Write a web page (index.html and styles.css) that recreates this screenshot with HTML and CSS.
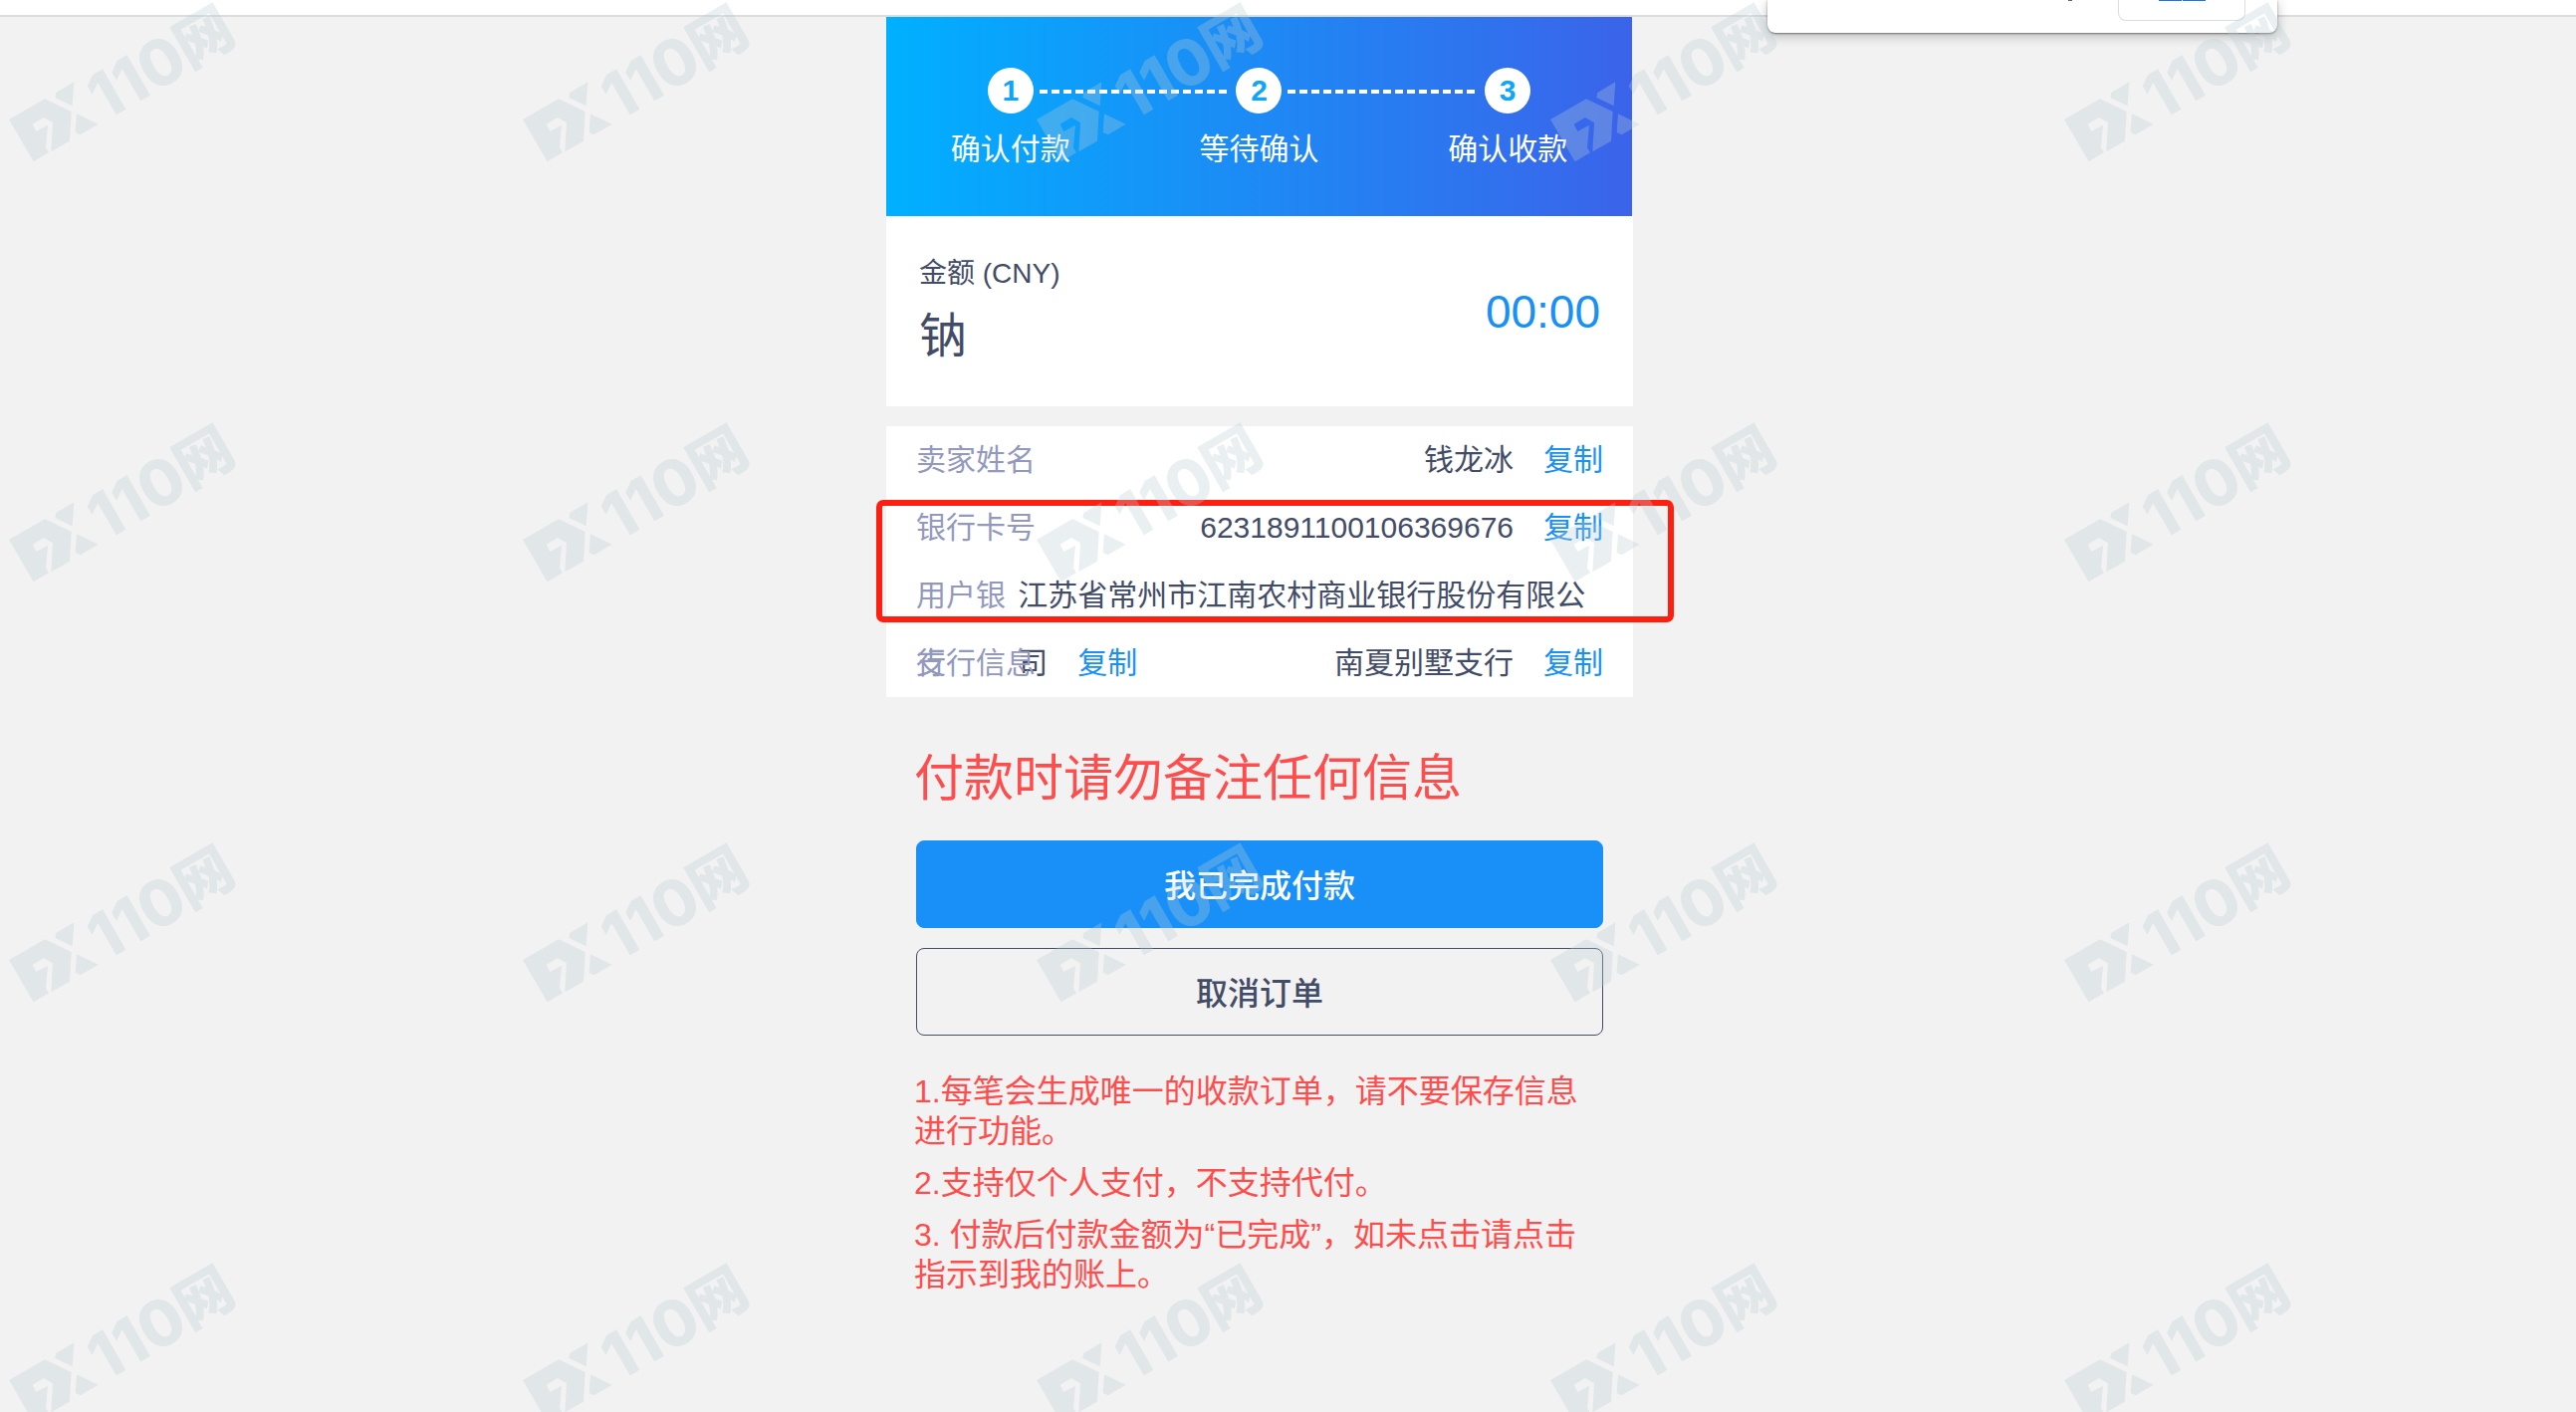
FILE: index.html
```html
<!DOCTYPE html>
<html lang="zh-CN">
<head>
<meta charset="utf-8">
<meta name="viewport" content="width=device-width, initial-scale=1">
<title>确认付款</title>
<link rel="stylesheet" href="styles.css">
</head>
<body>
<div class="toolbar"></div>

<main class="page">
  <div class="column">
    <ol class="steps">
      <li class="step"><span class="step-number">1</span><span class="step-label">确认付款</span></li>
      <li class="step"><span class="step-number">2</span><span class="step-label">等待确认</span></li>
      <li class="step"><span class="step-number">3</span><span class="step-label">确认收款</span></li>
    </ol>

    <section class="amount">
      <div>
        <div class="amount-label">金额 (CNY)</div>
        <div class="amount-value">钠</div>
      </div>
      <time class="countdown">00:00</time>
    </section>

    <section class="details">
      <div class="row"><span>卖家姓名</span><span class="value">钱龙冰<button class="copy" type="button">复制</button></span></div>
      <div class="row"><span>银行卡号</span><span class="value">6231891100106369676<button class="copy" type="button">复制</button></span></div>
      <div class="row"><span>用户银行</span><span class="value">江苏省常州市江南农村商业银行股份有限公司<button class="copy" type="button">复制</button></span></div>
      <div class="row"><span>支行信息</span><span class="value">南夏别墅支行<button class="copy" type="button">复制</button></span></div>
      <div class="highlight"></div>
    </section>

    <h1 class="warning">付款时请勿备注任何信息</h1>

    <div class="actions">
      <button class="btn btn-primary" type="button">我已完成付款</button>
      <button class="btn btn-outline" type="button">取消订单</button>
    </div>

    <div class="notes">
      <p>1.每笔会生成唯一的收款订单，请不要保存信息进行功能。</p>
      <p>2.支持仅个人支付，不支持代付。</p>
      <p>3. 付款后付款金额为“已完成”，如未点击请点击指示到我的账上。</p>
    </div>
  </div>
</main>

<div class="popup">
  <i class="popup-mark"></i>
  <div class="popup-button"><i></i><i></i></div>
</div>

<svg class="watermark" aria-hidden="true">
  <defs>
    <pattern id="mark" width="516" height="422" patternUnits="userSpaceOnUse">
      <g transform="scale(.3333)">
        <path d="M27 360 135 298 215 336 210 425 154 457 159 370 132 354 98 374 109 396 144 377 138 445 147 460 101 487Z"/>
        <path d="M223 247 218 319 166 294 169 279Z"/>
        <path d="M231 343 296 374 242 406 227 399Z"/>
      </g>
      <g transform="translate(105 122) rotate(-30)">
        <text class="mark-digits" x="0" y="0">110</text>
        <text class="mark-word" x="100" y="-3">网</text>
      </g>
    </pattern>
  </defs>
  <rect width="100%" height="100%" fill="url(#mark)"/>
</svg>
</body>
</html>
```
FILE: styles.css
```css
* { box-sizing: border-box; }

body {
  margin: 0;
  min-height: 100vh;
  background: #f2f2f2;
  color: #434c67;
  font-family: "Liberation Sans", "Noto Sans CJK SC", sans-serif;
  font-size: 30px;
}

button { font: inherit; cursor: pointer; }

.toolbar {
  height: 17px;
  background: #fff;
  border-bottom: 2px solid #dadddc;
}

.page { padding-right: 57px; }

.column {
  max-width: 750px;
  margin: 0 auto;
}

/* progress */
.steps {
  display: grid;
  grid-template-columns: repeat(3, 1fr);
  height: 200px;
  margin: 0 1px 0 0;
  padding: 51px 0 0;
  list-style: none;
  color: #fff;
  background: linear-gradient(90deg, #00b0ff, #3b63ea);
}

.step {
  position: relative;
  display: flex;
  flex-direction: column;
  align-items: center;
  gap: 14px;
}

.step-number {
  width: 46px;
  height: 46px;
  border-radius: 50%;
  background: #fff;
  color: #0ea5fb;
  font-weight: bold;
  line-height: 46px;
  text-align: center;
}

.step-label { line-height: 44px; }

.step + .step::before {
  content: "";
  position: absolute;
  top: 22px;
  left: -96px;
  width: 192px;
  height: 4px;
  background: repeating-linear-gradient(90deg, #fff 0 8px, transparent 8px 12px);
}

/* amount */
.amount {
  display: flex;
  justify-content: space-between;
  align-items: center;
  height: 191px;
  padding: 0 33px;
  background: #fff;
}

.amount-label { padding-top: 2px; font-size: 28px; line-height: 48px; }
.amount-value { font-size: 48px; line-height: 78px; }
.countdown { color: #1890f7; font-size: 46px; line-height: 54px; }

/* payee details */
.details {
  position: relative;
  margin-top: 20px;
  padding: 0 30px;
  background: #fff;
}

.row {
  display: flex;
  justify-content: space-between;
  height: 68px;
  color: #9299bd;
  line-height: 68px;
}

.value { color: #434c67; }

.copy {
  margin: 0 0 0 30px;
  padding: 0;
  border: 0;
  background: none;
  color: #1890f7;
}

.highlight {
  position: absolute;
  top: 74px;
  left: -10px;
  right: -41px;
  height: 123px;
  border: 6px solid #ff1f10;
  border-radius: 7px;
}

.warning {
  margin: 42px 28px 22px;
  color: #ff4d4d;
  font-size: 50px;
  font-weight: normal;
  line-height: 80px;
}

.actions {
  display: grid;
  gap: 20px;
  padding: 0 30px;
}

.btn {
  height: 88px;
  padding: 0 0 3px;
  border: 1px solid #434c67;
  border-radius: 8px;
  background: none;
  color: #434c67;
  font-size: 32px;
  font-weight: 500;
}

.btn-primary {
  border-color: #1890f7;
  background: #1890f7;
  color: #fff;
}

.notes {
  padding: 36px 28px;
  color: #ff4d4d;
  font-size: 32px;
  line-height: 40px;
}

.notes p { margin: 0 0 12px; }

/* popup hanging from the top edge of the window */
.popup {
  position: absolute;
  top: 0;
  right: 300px;
  display: flex;
  justify-content: flex-end;
  gap: 46px;
  width: 512px;
  height: 33px;
  padding-right: 32px;
  border-radius: 0 0 8px 8px;
  background: #fff;
  box-shadow: 0 1px 2px rgba(0, 0, 0, .45), 0 3px 12px rgba(0, 0, 0, .25);
}

.popup-mark { width: 4px; height: 1px; background: #5f6368; }

.popup-button {
  display: flex;
  justify-content: center;
  gap: 1px;
  width: 128px;
  height: 21px;
  border: 1px solid #dadce0;
  border-top: 0;
  border-radius: 0 0 8px 8px;
}

.popup-button i { width: 23px; height: 1px; background: #1a73e8; }

/* tiled watermark */
.watermark {
  position: fixed;
  inset: 0;
  width: 100%;
  height: 100%;
  fill: #b9ccd3;
  opacity: .3;
  pointer-events: none;
}

.mark-digits { font: 800 64px Inter, sans-serif; }
.mark-word { font: 900 58px "Noto Sans CJK SC", sans-serif; }
```
